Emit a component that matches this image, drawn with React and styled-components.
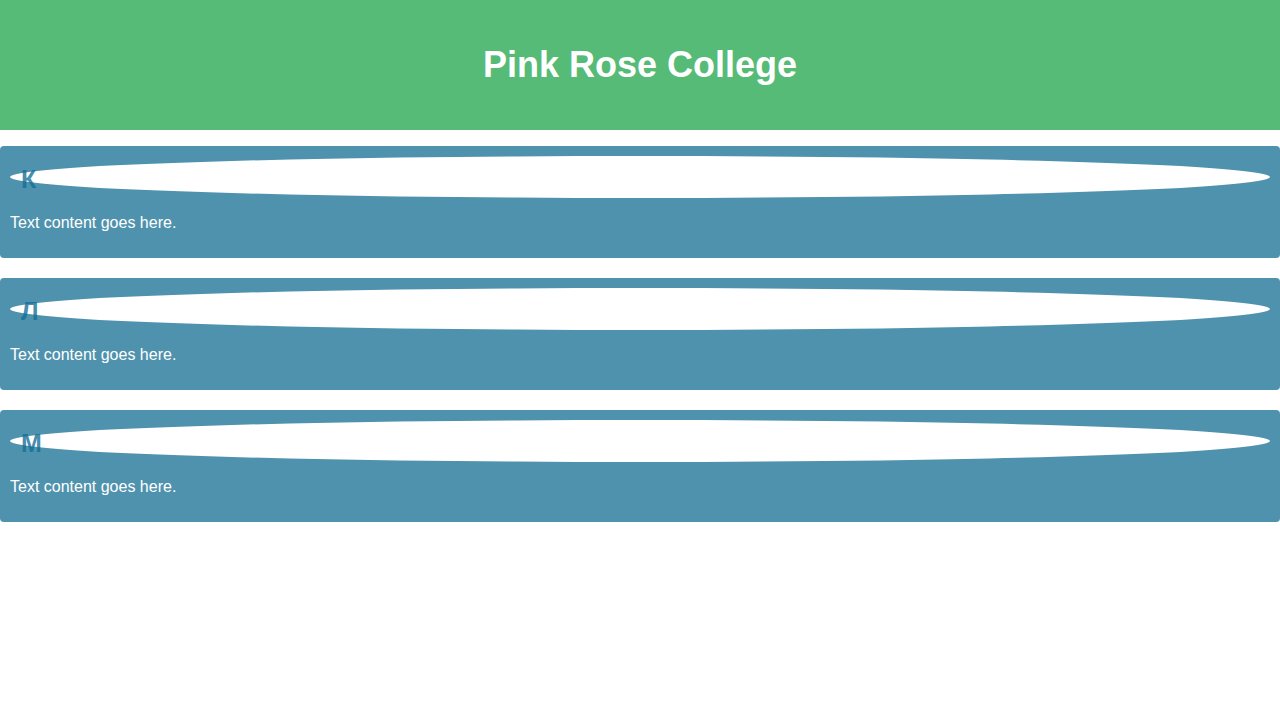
import React from "react";
import styled, { createGlobalStyle } from "styled-components";

const sections = [
	{ letter: "К", text: "Text content goes here." },
	{ letter: "Л", text: "Text content goes here." },
	{ letter: "М", text: "Text content goes here." },
];

const App = () => {
	return (
		<>
			<GlobalStyle />
			<Header>
				<Title>Pink Rose College</Title>
			</Header>
			<Main>
				{sections.map((s, i) => (
					<Card key={i}>
						<Letter>{s.letter}</Letter>
						<Body>{s.text}</Body>
					</Card>
				))}
			</Main>
		</>
	);
};

export default App;

const GlobalStyle = createGlobalStyle`
	body {
		margin: 0;
		background: #ffffff;
		font-family: "Liberation Sans", Arial, sans-serif;
	}
`;

const Header = styled.header`
	height: 130px;
	background-color: #56bb76;
	display: flex;
	align-items: center;
	justify-content: center;
`;

const Title = styled.h1`
	margin: 0;
	font-size: 36px;
	font-weight: 700;
	color: #ffffff;
`;

const Main = styled.main`
	padding-top: 16px;
	display: flex;
	flex-direction: column;
	gap: 20px;
`;

const Card = styled.section`
	background-color: #4f92ad;
	border-radius: 4px;
	padding: 10px;
`;

const Letter = styled.h2`
	margin: 0;
	height: 42px;
	padding: 5px 11px 0;
	box-sizing: border-box;
	display: flex;
	align-items: center;
	background: #ffffff;
	border-radius: 50%;
	font-size: 25px;
	font-weight: 700;
	line-height: 1;
	color: rgba(20, 110, 150, 0.8);
`;

const Body = styled.p`
	margin: 16px 0;
	font-size: 16px;
	color: #ffffff;
`;
